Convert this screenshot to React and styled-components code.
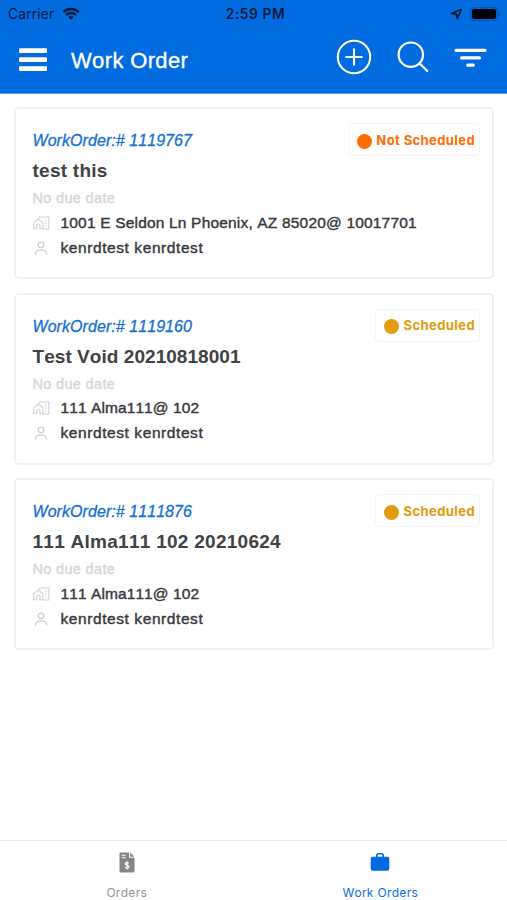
import React from "react";
import styled, { createGlobalStyle } from "styled-components";

const GlobalStyle = createGlobalStyle`
  * { box-sizing: border-box; }
  body { margin: 0; background: #fff; }
  svg { display: block; flex: none; }
`;

const Screen = styled.div`
  width: 507px;
  height: 900px;
  display: flex;
  flex-direction: column;
  overflow: hidden;
  background: #fff;
  font-family: "Liberation Sans", Arial, sans-serif;
  font-kerning: none;
  white-space: nowrap;
`;

const TopArea = styled.header`
  height: 94px;
  flex: none;
  background: #006cdf;
  border-bottom: 1px solid #5b9fea;
`;

const StatusBar = styled.div`
  height: 28px;
  display: grid;
  grid-template-columns: 1fr auto 1fr;
  align-items: center;
  padding: 0 6px 0 8px;
  font-family: Inter, sans-serif;
  color: #051a38;
`;

const Carrier = styled.div`
  display: flex;
  align-items: center;
  gap: 7px;
  font-size: 13.8px;
  letter-spacing: 0.25px;
`;

const Clock = styled.div`
  margin-left: 2px;
  font-size: 13.8px;
  font-weight: 600;
  letter-spacing: 0.55px;
`;

const StatusIcons = styled.div`
  display: flex;
  justify-content: flex-end;
  align-items: center;
  gap: 7px;
`;

const NavBar = styled.div`
  height: 65px;
  display: flex;
  align-items: center;
  padding: 0 20px 0 19px;
`;

const NavTitle = styled.h1`
  flex: 1;
  margin: 0 0 0 24px;
  font-size: 22px;
  line-height: 26px;
  font-weight: 400;
  letter-spacing: ${(p) => p.$spacing}px;
  color: #fff;
  -webkit-text-stroke: 0.35px #fff;
`;

const Actions = styled.div`
  display: flex;
  align-items: center;
  gap: 25px;
  margin-top: -7px;
`;

const List = styled.main`
  flex: 1;
  display: flex;
  flex-direction: column;
  gap: 13.5px;
  padding: 13px 13px 0 13.5px;
`;

const Card = styled.article`
  height: 172px;
  flex: none;
  border: 2px solid #f0f0f0;
  border-radius: 5px;
  padding: 18px 12px 0 17px;
`;

const CardTop = styled.div`
  display: flex;
  justify-content: space-between;
  align-items: flex-start;
  height: 28px;
`;

const OrderId = styled.div`
  line-height: 28px;
  font-size: 16px;
  font-style: italic;
  letter-spacing: 0.06px;
  color: #1470d2;
  -webkit-text-stroke: 0.3px #1470d2;
`;

const Badge = styled.div`
  display: flex;
  align-items: center;
  gap: 4px;
  height: 33px;
  margin-top: -4px;
  padding: 0 4px 0 8px;
  border: 1.5px solid #f4f4f4;
  border-radius: 4px;
  font-family: Inter, sans-serif;
  font-size: 13px;
  font-weight: 700;
  letter-spacing: ${(p) => p.$spacing}px;
  color: ${(p) => p.$color};
`;

const Dot = styled.span`
  width: 15px;
  height: 15px;
  margin-top: 3px;
  border-radius: 50%;
  background: currentColor;
`;

const Title = styled.h2`
  margin: 0;
  line-height: 32px;
  font-size: 19px;
  font-weight: 700;
  letter-spacing: ${(p) => p.$spacing}px;
  color: #404244;
`;

const DueDate = styled.div`
  line-height: 23px;
  font-size: 14.5px;
  letter-spacing: 0.33px;
  color: #d6d6d6;
  -webkit-text-stroke: 0.35px #d6d6d6;
`;

const Detail = styled.div`
  display: flex;
  align-items: center;
  gap: 11px;
  height: 25px;
  font-size: 15.5px;
  letter-spacing: ${(p) => p.$spacing}px;
  color: #36383b;
  -webkit-text-stroke: 0.4px #36383b;
`;

const TabBar = styled.nav`
  height: 60px;
  flex: none;
  display: grid;
  grid-template-columns: 1fr 1fr;
  border-top: 1px solid #ececec;
`;

const Tab = styled.div`
  display: flex;
  flex-direction: column;
  align-items: center;
  gap: 11px;
  padding-top: 11px;
  font-family: Inter, sans-serif;
  font-size: 12px;
  line-height: 18px;
  letter-spacing: ${(p) => p.$spacing}px;
  color: ${(p) => (p.$active ? "#0a6fdb" : "#929292")};
`;

const WifiIcon = () => (
  <svg width="18" height="14" viewBox="0 0 18 14" fill="none" stroke="currentColor" strokeWidth="2.4">
    <path d="M1.3 5.1a11 11 0 0 1 15.4 0M4 8a7.1 7.1 0 0 1 10 0" />
    <path d="M9 12.8 6.2 10a4 4 0 0 1 5.6 0z" fill="currentColor" stroke="none" />
  </svg>
);

const LocationIcon = () => (
  <svg width="13" height="12" viewBox="0 0 13 12" fill="none" stroke="currentColor" strokeWidth="1.6" strokeLinejoin="round">
    <path d="M11.4 1.3 7.2 10.6 6.5 6.1 1.5 5.5z" />
  </svg>
);

const BatteryIcon = () => (
  <svg width="31" height="14" viewBox="0 0 31 14">
    <rect x=".7" y=".7" width="26.6" height="12.6" rx="3.5" fill="none" stroke="#0a4da0" strokeWidth="1.1" />
    <rect x="2" y="2" width="24" height="10" rx="2" fill="#000408" />
    <path d="M29 4.8c1.6.8 1.6 3.6 0 4.4z" fill="#0a4da0" />
  </svg>
);

const MenuIcon = () => (
  <svg width="28" height="26" viewBox="0 0 28 26" fill="#fff">
    <rect y=".3" width="28" height="4.7" rx="1" />
    <rect y="9.3" width="28" height="4.7" rx="1" />
    <rect y="18.3" width="28" height="4.7" rx="1" />
  </svg>
);

const AddIcon = () => (
  <svg width="36" height="36" viewBox="0 0 36 36" fill="none" stroke="#fff" strokeWidth="2.1" strokeLinecap="round">
    <circle cx="18" cy="18" r="16.2" />
    <path d="M18 10.2v15.6M10.2 18h15.6" />
  </svg>
);

const SearchIcon = () => (
  <svg width="32" height="32" viewBox="0 0 32 32" fill="none" stroke="#fff" strokeWidth="2.2" strokeLinecap="round">
    <circle cx="13.8" cy="13.7" r="12.2" />
    <path d="m22.5 22.4 7.7 7.6" />
  </svg>
);

const FilterIcon = () => (
  <svg width="33" height="20" viewBox="0 0 33 20" fill="none" stroke="#fff" strokeWidth="3.3" strokeLinecap="round">
    <path d="M2 3.3h29M7.6 10.9h17.8M13.8 18.2h5.4" />
  </svg>
);

const PlaceIcon = () => (
  <svg width="17" height="14" viewBox="0 0 17 14" fill="none" stroke="#d2d2d2" strokeWidth="1.1">
    <path d="M.8 6.7 5.3 3l4.6 3.7v6.1H7V9.6a1.6 1.6 0 0 0-3.3 0v3.2H.8z" />
    <path d="M6.4 2.4V1h9.4v12h-6" />
    <path d="M12.1 4.2h1.4M12.1 7.1h1.4M12.1 10h1.4" />
  </svg>
);

const PersonIcon = () => (
  <svg width="17" height="14" viewBox="0 0 17 14" fill="none" stroke="#cbcbcb" strokeWidth="1.2" strokeLinecap="round">
    <circle cx="8" cy="3.8" r="2.8" />
    <path d="M2.4 13.2c0-5.7 11.3-5.7 11.3 0" />
  </svg>
);

const InvoiceIcon = () => (
  <svg width="16" height="21" viewBox="0 0 16 21">
    <path d="M1.6.5h8.5v5.2h5.4v13.2a1.5 1.5 0 0 1-1.5 1.5H2a1.5 1.5 0 0 1-1.5-1.5V1.8C.5 1 .9.5 1.6.5z" fill="#858585" />
    <path d="M11.2.6l4.2 4.1h-4.2z" fill="#858585" />
    <path d="M2.6 3.2h4.1M2.6 5.8h4.1" stroke="#fff" strokeWidth="1.1" />
    <path d="M10 11.1c-1.2-.9-3.8-.7-3.8.7 0 1.9 3.9 1.1 3.9 3 0 1.5-2.8 1.7-4.1.6M8.1 9.2v8.2" fill="none" stroke="#fff" strokeWidth="1.2" />
  </svg>
);

const BriefcaseIcon = () => (
  <svg width="20" height="21" viewBox="0 0 20 21">
    <rect x=".7" y="4.8" width="18.6" height="14" rx="2" fill="#0069df" />
    <path d="M6.8 5V3.2c0-.8.6-1.4 1.4-1.4h3.6c.8 0 1.4.6 1.4 1.4V5" fill="none" stroke="#0069df" strokeWidth="1.6" />
  </svg>
);

const NOT_SCHEDULED = { label: "Not Scheduled", color: "#ff6d00", spacing: 0.4 };
const SCHEDULED = { label: "Scheduled", color: "#e39b0b", spacing: 0.42 };

const ORDERS = [
  {
    id: "1119767",
    title: "test this",
    titleSpacing: 0.25,
    address: "1001 E Seldon Ln Phoenix, AZ 85020@ 10017701",
    addressSpacing: 0.18,
    status: NOT_SCHEDULED,
  },
  {
    id: "1119160",
    title: "Test Void 20210818001",
    titleSpacing: 0.05,
    address: "111 Alma111@ 102",
    addressSpacing: 0.09,
    status: SCHEDULED,
  },
  {
    id: "1111876",
    title: "111 Alma111 102 20210624",
    titleSpacing: 0.27,
    address: "111 Alma111@ 102",
    addressSpacing: 0.09,
    status: SCHEDULED,
  },
];

function OrderCard({ order }) {
  return (
    <Card>
      <CardTop>
        <OrderId>WorkOrder:# {order.id}</OrderId>
        <Badge $color={order.status.color} $spacing={order.status.spacing}>
          <Dot />
          {order.status.label}
        </Badge>
      </CardTop>
      <Title $spacing={order.titleSpacing}>{order.title}</Title>
      <DueDate>No due date</DueDate>
      <Detail $spacing={order.addressSpacing}>
        <PlaceIcon />
        {order.address}
      </Detail>
      <Detail $spacing={0.58}>
        <PersonIcon />
        kenrdtest kenrdtest
      </Detail>
    </Card>
  );
}

export default function App() {
  return (
    <Screen>
      <GlobalStyle />
      <TopArea>
        <StatusBar>
          <Carrier>
            Carrier
            <WifiIcon />
          </Carrier>
          <Clock>2:59 PM</Clock>
          <StatusIcons>
            <LocationIcon />
            <BatteryIcon />
          </StatusIcons>
        </StatusBar>
        <NavBar>
          <MenuIcon />
          <NavTitle $spacing={0.35}>Work Order</NavTitle>
          <Actions>
            <AddIcon />
            <SearchIcon />
            <FilterIcon />
          </Actions>
        </NavBar>
      </TopArea>
      <List>
        {ORDERS.map((order) => (
          <OrderCard key={order.id} order={order} />
        ))}
      </List>
      <TabBar>
        <Tab $spacing={0.3}>
          <InvoiceIcon />
          Orders
        </Tab>
        <Tab $active $spacing={0.3}>
          <BriefcaseIcon />
          Work Orders
        </Tab>
      </TabBar>
    </Screen>
  );
}
